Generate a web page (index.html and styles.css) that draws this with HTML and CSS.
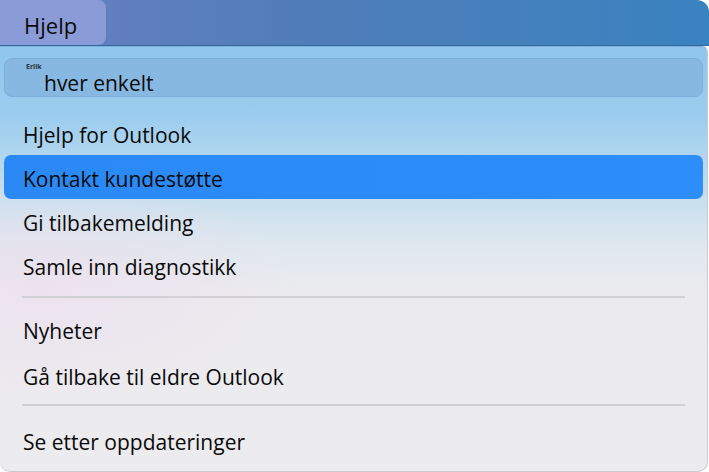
FILE: index.html
```html
<!DOCTYPE html>
<html lang="nb">
<head>
  <meta charset="UTF-8" />
  <meta name="viewport" content="width=device-width, initial-scale=1.0" />
  <title>Hjelp</title>
  <link rel="stylesheet" href="styles.css">
</head>
<body>
  <div class="window">
    <div class="menubar">
      <div class="menu-tab">Hjelp</div>
    </div>

    <div class="dropdown">
      <div class="search">
        <span class="search-label">Erlik</span>
        <span class="search-text">hver enkelt</span>
      </div>

      <ul class="menu-list">
        <li class="menu-item">Hjelp for Outlook</li>
        <li class="menu-item active">Kontakt kundestøtte</li>
        <li class="menu-item">Gi tilbakemelding</li>
        <li class="menu-item">Samle inn diagnostikk</li>
      </ul>
      <div class="divider"></div>
      <ul class="menu-list">
        <li class="menu-item tall">Nyheter</li>
        <li class="menu-item tall">Gå tilbake til eldre Outlook</li>
      </ul>
      <div class="divider"></div>
      <ul class="menu-list">
        <li class="menu-item">Se etter oppdateringer</li>
      </ul>
    </div>
  </div>
</body>
</html>
```

FILE: styles.css
```css
body {
  margin: 0;
  padding: 0;
  background: #ffffff;
  font-family: "Open Sans", "Noto Sans", sans-serif;
  color: #0a0a0a;
}
.window {
  width: 709px;
  height: 472px;
  overflow: hidden;
}
.menubar {
  height: 45px;
  border-bottom: 1px solid #33689a;
  border-top-right-radius: 12px;
  background: linear-gradient(90deg, #6b7fc2 0%, #4f7db9 45%, #3983c0 100%);
}
.menu-tab {
  width: 82px;
  height: 45px;
  padding-left: 24px;
  background: #8a9cd8;
  border-radius: 0 8px 8px 0;
  font-size: 22px;
  line-height: 51px;
}
.dropdown {
  height: 424px;
  margin-right: 1px;
  padding: 0 4px;
  border: 1px solid #c9cbd3;
  border-top-color: #7fb1dd;
  border-left: none;
  border-radius: 0 6px 10px 10px;
  background:
    radial-gradient(ellipse 260px 120px at 40px 240px, rgba(236, 222, 238, 0.7), rgba(236, 222, 238, 0)),
    linear-gradient(180deg, #8fc5ee 0px, #9ccdee 70px, #c7dfee 150px, #dfe8ee 200px, #ebebee 245px, #ecebee 100%);
}
.search {
  display: flex;
  flex-direction: column;
  height: 37px;
  margin-top: 11px;
  border: 1px solid #7cb0dc;
  border-radius: 8px;
  background: #86b8e2;
}
.search-label {
  margin: 4px 0 0 21px;
  font-size: 7px;
  line-height: 8px;
  font-weight: bold;
  color: #2b3340;
}
.search-text {
  margin-left: 39px;
  font-size: 21px;
  line-height: 24px;
}
.menu-list {
  list-style: none;
  margin: 0;
  padding: 0;
}
.menu-list:first-of-type {
  margin-top: 14px;
}
.menu-item {
  height: 40px;
  padding: 4px 0 0 19px;
  font-size: 21px;
  line-height: 41px;
  border-radius: 7px;
}
.menu-item.tall {
  height: 42px;
}
.menu-item.active {
  background: linear-gradient(90deg, #2a89f5, #2d8ef9);
}
.divider {
  height: 2px;
  margin: 9px 18px 9px 18px;
  background: #d1d1d5;
}
.divider + .menu-list .tall:last-child {
  margin-bottom: -2px;
}
.menu-list + .divider + .menu-list + .divider {
  margin-top: 7px;
  margin-bottom: 12px;
}
```
